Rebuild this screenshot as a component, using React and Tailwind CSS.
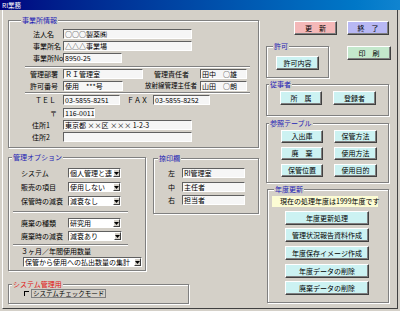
import React from "react";

const GRAY = "bg-[#d4d0c8]";

const Group = ({ label, red, left = 4, className = "", children }) => (
	<div className={`relative border border-[#808080] shadow-[inset_1px_1px_0_#fff,1px_1px_0_#fff] ${className}`}>
		<span
			className={`absolute -top-[6px] ${GRAY} px-[1px] leading-[10px] whitespace-nowrap ${red ? "text-[#e01010]" : "text-[#1c1cb4]"}`}
			style={{ left }}
		>
			{label}
		</span>
		{children}
	</div>
);

const Btn = ({ children, color = "bg-[#ccf2f2]", className = "" }) => (
	<button
		type="button"
		className={`flex items-center justify-center whitespace-nowrap border border-t-white border-l-white border-r-[#404040] border-b-[#404040] shadow-[inset_-1px_-1px_0_#808080] leading-none ${color} ${className}`}
	>
		{children}
	</button>
);

const Field = ({ value = "", className = "" }) => (
	<div
		className={`h-[10px] shrink-0 border border-t-[#606060] border-l-[#606060] border-b-white border-r-white bg-[#f6f6f6] pl-[1px] leading-[8px] whitespace-nowrap overflow-hidden ${className}`}
	>
		{value}
	</div>
);

const Select = ({ value, className = "" }) => (
	<div
		className={`flex h-[10px] shrink-0 border border-t-[#606060] border-l-[#606060] border-b-white border-r-white bg-white ${className}`}
	>
		<span className="flex-1 overflow-hidden whitespace-nowrap pl-[1px] leading-[8px]">{value}</span>
		<span className={`flex h-full w-[7px] items-center justify-center border border-t-white border-l-white border-r-[#404040] border-b-[#404040] ${GRAY}`}>
			<svg width="5" height="3" viewBox="0 0 5 3">
				<path d="M0 0H5L2.5 3Z" fill="#000" />
			</svg>
		</span>
	</div>
);

const Sep = ({ className = "" }) => (
	<div className={`h-[2px] border-t border-t-[#808080] border-b border-b-white ${className}`} />
);

const Row = ({ className = "", children }) => (
	<div className={`flex h-[10px] items-center whitespace-nowrap ${className}`}>{children}</div>
);

export default function App() {
	return (
		<div className={`h-[311px] w-[400px] overflow-hidden ${GRAY} font-['Noto_Sans_CJK_JP',sans-serif] text-[7px] text-black`}>
			{/* title bar */}
			<div className="h-[10px] bg-linear-to-r from-[#000080] to-[#1084d0] pl-[2px] text-[6.5px] leading-[10px] text-white">
				RI業務
			</div>

			<div className="ml-[2px] flex h-[299px] w-[396px] border-l border-l-white border-r border-r-[#404040] border-b border-b-[#404040] pl-[5px]">
				{/* left column */}
				<div className="w-[251px] pt-[10px]">
					<Group label="事業所情報" left={12} className="h-[128px]">
						<Row className="mt-[8px]">
							<span className="w-[54px] shrink-0 pl-[24px]">法人名</span>
							<Field className="w-[129px]" value="○○○製薬㈱" />
						</Row>
						<Row className="mt-[2px]">
							<span className="w-[54px] shrink-0 pl-[24px]">事業所名</span>
							<Field className="w-[129px]" value="△△△事業場" />
						</Row>
						<Row className="mt-[2px]">
							<span className="w-[54px] shrink-0 pl-[24px]">事業所No</span>
							<Field className="w-[59px]" value="8950-25" />
						</Row>
						<Sep className="ml-[16px] mt-[3px] w-[225px]" />
						<Row className="mt-[1px]">
							<span className="w-[54px] shrink-0 pl-[21px]">管理部署</span>
							<Field className="w-[80px]" value="ＲＩ管理室" />
							<span className="ml-[11px] w-[46px] shrink-0">管理責任者</span>
							<Field className="w-[47px]" value="田中　○雄" />
						</Row>
						<Row className="mt-[2px]">
							<span className="w-[54px] shrink-0 pl-[21px]">許可番号</span>
							<Field className="w-[60px]" value="使用　***号" />
							<span className="ml-[22px] w-[55px] shrink-0 text-[6.5px]">放射線管理主任者</span>
							<Field className="w-[47px]" value="山田　○朗" />
						</Row>
						<Sep className="ml-[16px] mt-[1px] w-[225px]" />
						<Row className="mt-[1px]">
							<span className="w-[54px] shrink-0 pl-[26px]">ＴＥＬ</span>
							<Field className="w-[57px]" value="03-5855-8251" />
							<span className="ml-[7px] w-[26px] shrink-0">ＦＡＸ</span>
							<Field className="w-[57px]" value="03-5855-8252" />
						</Row>
						<Row className="mt-[3px]">
							<span className="w-[54px] shrink-0 pl-[41px]">〒</span>
							<Field className="w-[32px]" value="116-0011" />
						</Row>
						<Row className="mt-[2px]">
							<span className="w-[54px] shrink-0 pl-[23px]">住所1</span>
							<Field className="w-[129px]" value="東京都 ××区 ××× 1-2-3" />
						</Row>
						<Row className="mt-[2px]">
							<span className="w-[54px] shrink-0 pl-[23px]">住所2</span>
							<Field className="w-[129px]" />
						</Row>
					</Group>

					<div className="mt-[9px] flex items-start">
						<Group label="管理オプション" left={3} className="h-[114px] w-[138px]">
							<Row className="mt-[10px]">
								<span className="w-[59px] shrink-0 pl-[12px]">システム</span>
								<Select className="w-[53px]" value="個人管理と連" />
							</Row>
							<Row className="mt-[4px]">
								<span className="w-[59px] shrink-0 pl-[12px]">販売の項目</span>
								<Select className="w-[53px]" value="使用しない" />
							</Row>
							<Row className="mt-[4px]">
								<span className="w-[59px] shrink-0 pl-[12px]">保管時の減衰</span>
								<Select className="w-[53px]" value="減衰なし" />
							</Row>
							<Sep className="ml-[4px] mt-[5px] w-[115px]" />
							<Row className="mt-[5px]">
								<span className="w-[59px] shrink-0 pl-[12px]">廃棄の種類</span>
								<Select className="w-[53px]" value="研究用" />
							</Row>
							<Row className="mt-[3px]">
								<span className="w-[59px] shrink-0 pl-[12px]">廃棄時の減衰</span>
								<Select className="w-[54px]" value="減衰あり" />
							</Row>
							<Sep className="ml-[4px] mt-[3px] w-[115px]" />
							<Row>
								<span className="pl-[12px]">３ヶ月／年間使用数量</span>
							</Row>
							<Select className="ml-[14px] mt-[1px] w-[119px]" value="保管から使用への払出数量の集計" />
						</Group>

						<Group label="捺印欄" left={4} className="ml-[7px] mt-[1px] h-[56px] w-[106px]">
							<Row className="mt-[9px]">
								<span className="w-[28px] shrink-0 pl-[14px]">左</span>
								<Field className="w-[63px]" value="RI管理室" />
							</Row>
							<Row className="mt-[4px]">
								<span className="w-[28px] shrink-0 pl-[14px]">中</span>
								<Field className="w-[63px]" value="主任者" />
							</Row>
							<Row className="mt-[3px]">
								<span className="w-[28px] shrink-0 pl-[14px]">右</span>
								<Field className="w-[63px]" value="担当者" />
							</Row>
						</Group>
					</div>

					<Group label="システム管理用" red left={3} className="mt-[13px] h-[20px] w-[181px]">
						<div className="mt-[4px] flex items-center pl-[15px]">
							<span className="h-[5px] w-[5px] border-t border-l border-t-black border-l-black" />
							<span className="ml-[2px] h-[9px] whitespace-nowrap border border-[#808080] px-[1px] text-[6.5px] leading-[7px]">
								システムチェックモード
							</span>
						</div>
					</Group>
				</div>

				{/* right column */}
				<div className="ml-[7px] flex w-[125px] flex-col pt-[11px]">
					<div className="flex justify-end gap-[10px] pr-[2px]">
						<Btn color="bg-[#f4b8b8]" className="h-[14px] w-[43px]">更　新</Btn>
						<Btn color="bg-[#b8b8f4]" className="h-[14px] w-[42px]">終　了</Btn>
					</div>

					<div className="mt-[11px] flex items-start justify-between">
						<Group label="許可" left={6} className="h-[32px] w-[63px]">
							<Btn className="ml-[9px] mt-[9px] h-[14px] w-[43px]">許可内容</Btn>
						</Group>
						<Btn color="bg-[#c4e8cc]" className="h-[14px] w-[44px]">印　刷</Btn>
					</div>

					<Group label="従事者" left={2} className="mt-[6px] h-[32px] w-[123px]">
						<div className="mt-[6px] flex">
							<Btn className="ml-[13px] h-[14px] w-[42px]">所　属</Btn>
							<Btn className="ml-[11px] h-[14px] w-[43px]">登録者</Btn>
						</div>
					</Group>

					<Group label="参照テーブル" left={2} className="mt-[7px] h-[60px] w-[123px]">
						<div className="mt-[6px] flex">
							<Btn className="ml-[14px] h-[13px] w-[42px]">入出庫</Btn>
							<Btn className="ml-[11px] h-[13px] w-[43px]">保管方法</Btn>
						</div>
						<div className="mt-[4px] flex">
							<Btn className="ml-[14px] h-[13px] w-[42px]">廃　棄</Btn>
							<Btn className="ml-[11px] h-[13px] w-[43px]">使用方法</Btn>
						</div>
						<div className="mt-[4px] flex">
							<Btn className="ml-[14px] h-[13px] w-[42px]">保管位置</Btn>
							<Btn className="ml-[11px] h-[13px] w-[43px]">使用目的</Btn>
						</div>
					</Group>

					<Group label="年度更新" left={6} className="ml-[1px] mt-[6px] h-[114px] w-[122px]">
						<div className="ml-[4px] mt-[6px] h-[11px] w-[106px] bg-[#fcfcd4] pl-[8px] leading-[11px] whitespace-nowrap">
							現在の処理年度は1999年度です
						</div>
						<Btn className="ml-[17px] mt-[4px] h-[14px] w-[84px]">年度更新処理</Btn>
						<Btn className="ml-[17px] mt-[3px] h-[14px] w-[84px]">管理状況報告資料作成</Btn>
						<Btn className="ml-[17px] mt-[4px] h-[14px] w-[84px]">年度保存イメージ作成</Btn>
						<Btn className="ml-[17px] mt-[4px] h-[14px] w-[84px]">年度データの削除</Btn>
						<Btn className="ml-[17px] mt-[3px] h-[14px] w-[84px]">廃棄データの削除</Btn>
					</Group>
				</div>
			</div>
		</div>
	);
}
